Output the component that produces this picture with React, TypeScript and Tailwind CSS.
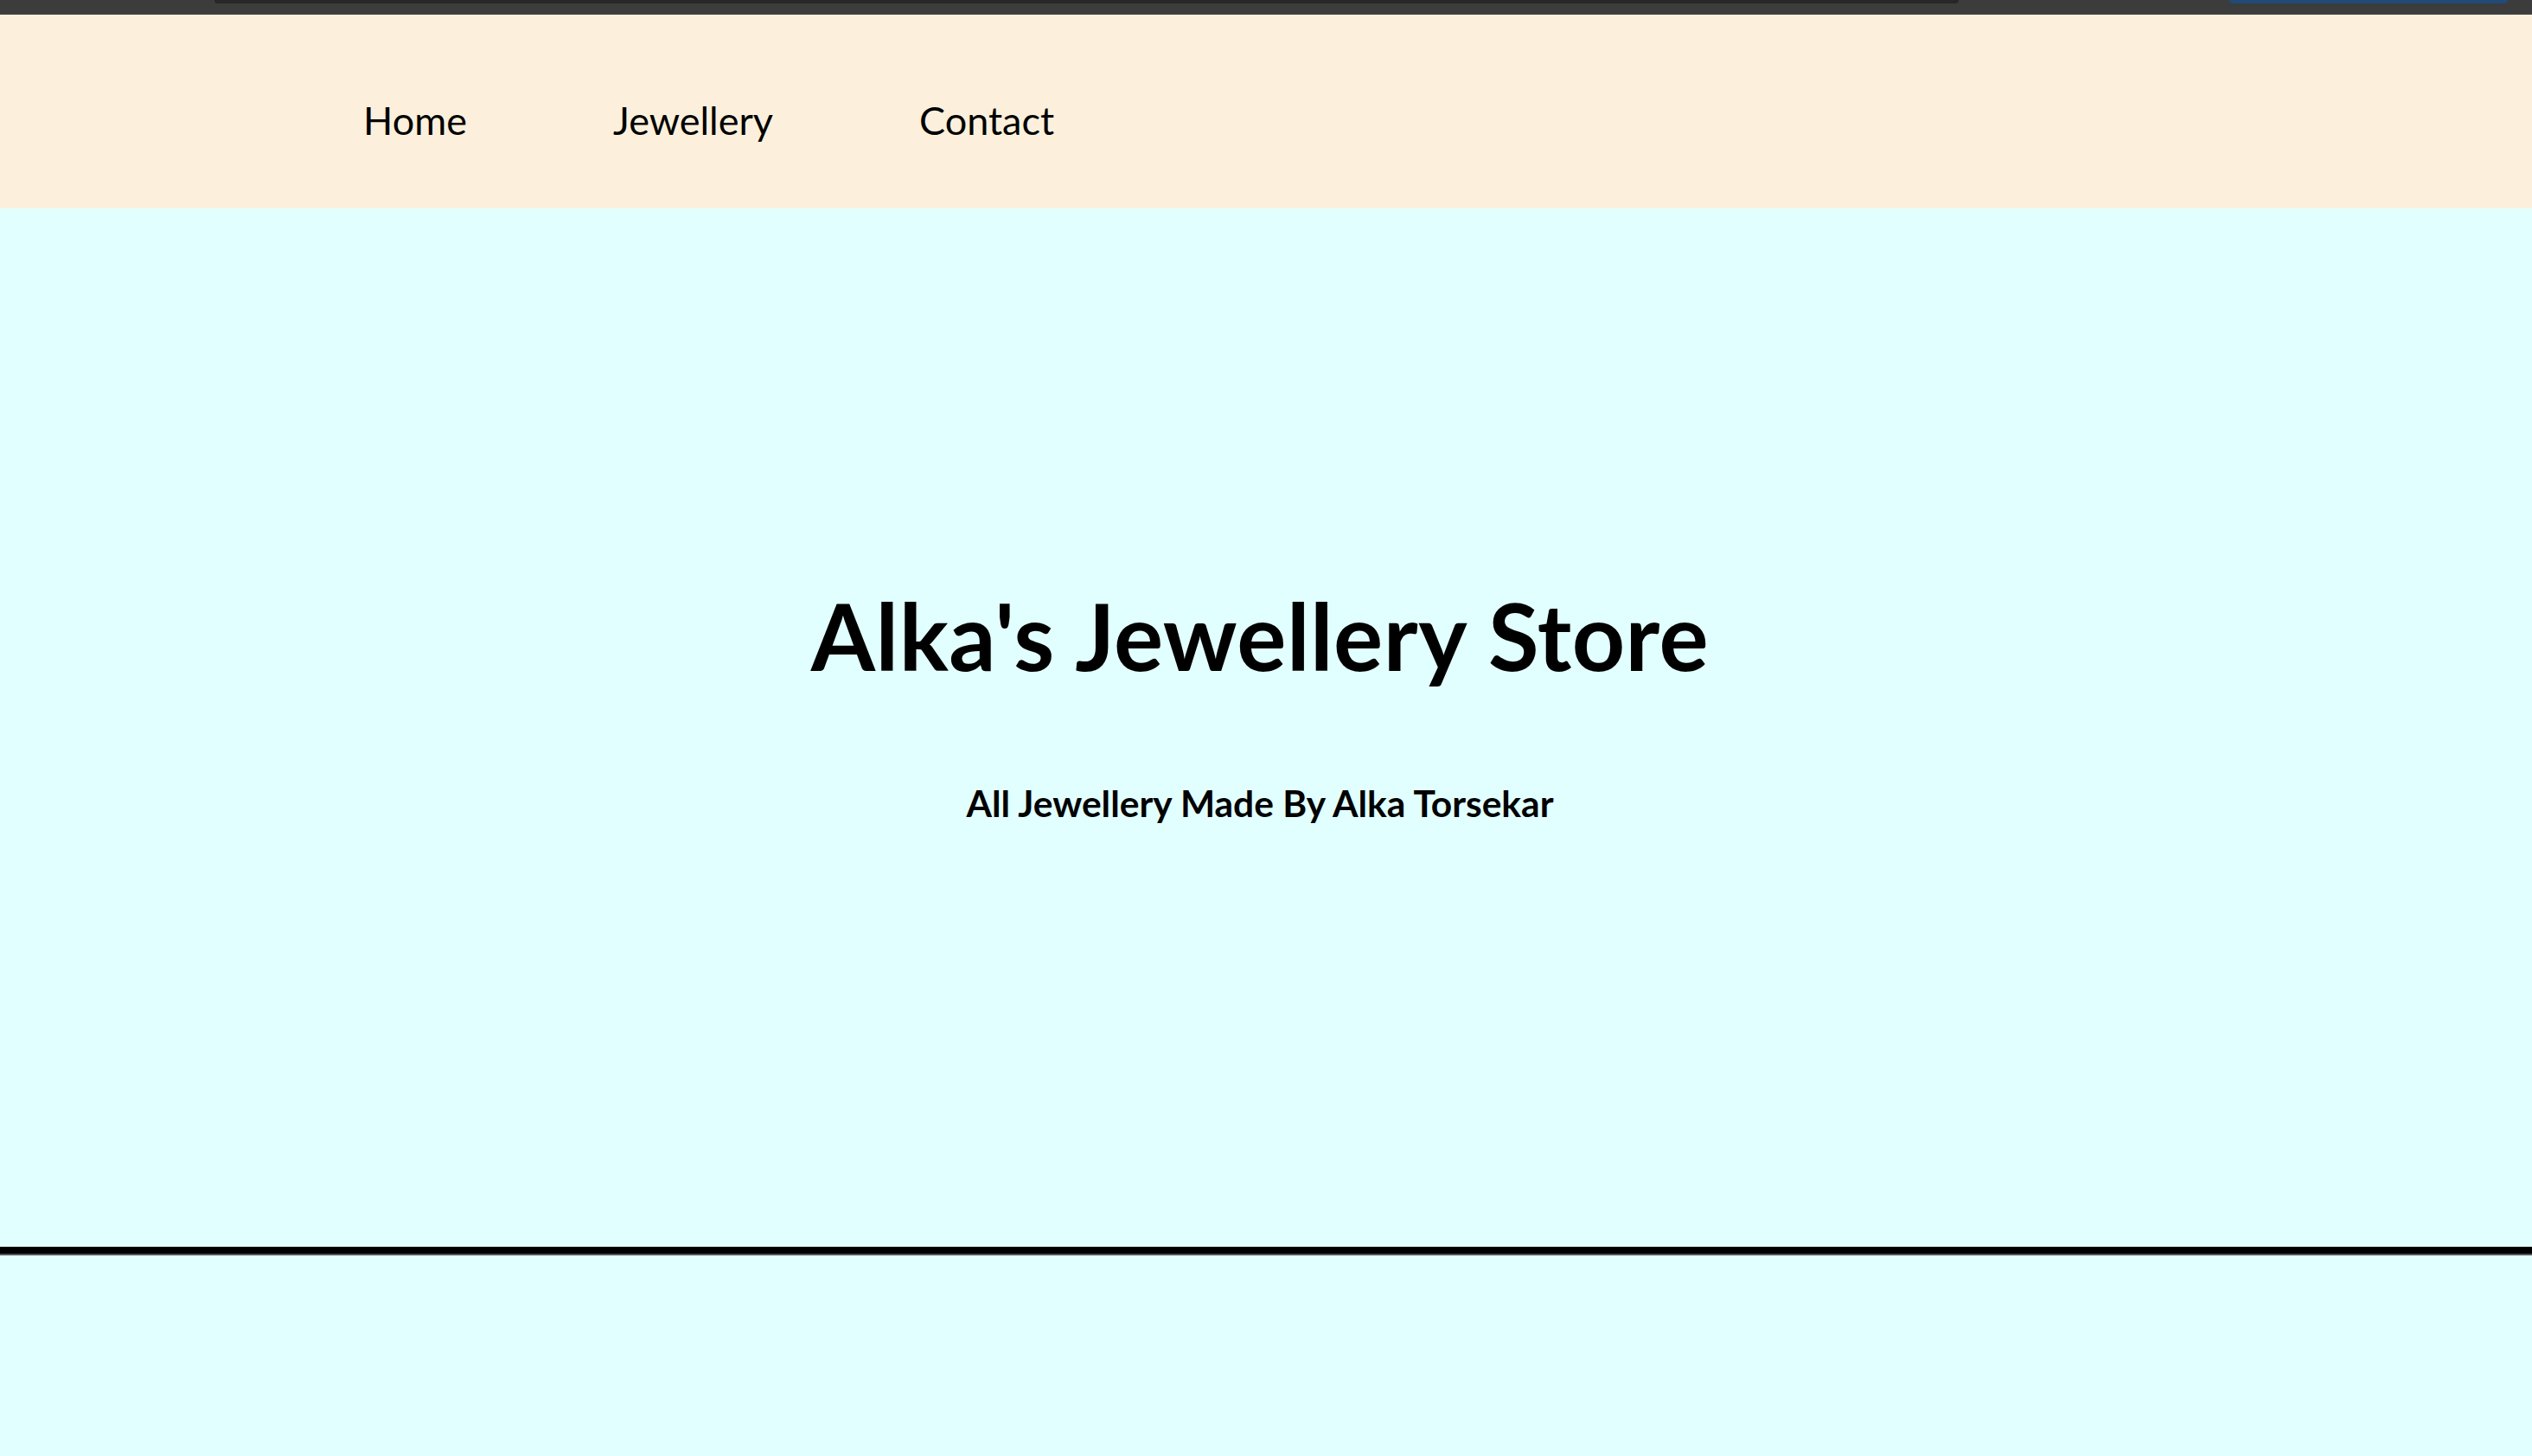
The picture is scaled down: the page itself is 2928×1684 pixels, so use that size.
const NAV_ITEMS = ["Home", "Jewellery", "Contact"];

function BrowserStrip() {
  // leftover browser chrome at the very top of the capture
  return (
    <div className="h-[17px] bg-[#3c3c3c] border-b border-[#4d4d4d] flex items-start">
      <div className="ml-[248px] w-[2017px] h-[4px] rounded-b-[8px] bg-[#272727]" />
      <div className="ml-[313px] w-[322px] h-[4px] rounded-b-[8px] bg-[#224a76]" />
    </div>
  );
}

function Header() {
  return (
    <header className="h-[224px] bg-[#fcf0dc] flex items-center pl-[420px] gap-[169px] pt-[20px]">
      {NAV_ITEMS.map((item) => (
        <a
          key={item}
          href="#"
          className="text-[45px] leading-none text-black font-normal"
        >
          {item}
        </a>
      ))}
    </header>
  );
}

function Hero() {
  return (
    <section className="h-[1201px] bg-[#e2ffff] flex flex-col items-center pt-[428px] pr-[14px]">
      <h1 className="text-[107px] leading-[132px] font-bold text-black tracking-[0.5px]">
        Alka's Jewellery Store
      </h1>
      <p className="mt-[100px] text-[42.5px] leading-[56px] font-bold text-black">
        All Jewellery Made By Alka Torsekar
      </p>
    </section>
  );
}

export default function App() {
  return (
    <div
      className="h-[1684px] flex flex-col bg-[#e2ffff] overflow-hidden"
      style={{ fontFamily: "Lato, 'Open Sans', sans-serif" }}
    >
      <BrowserStrip />
      <Header />
      <Hero />
      <div className="h-[8px] bg-black" />
      <div className="h-[2px] bg-[#555555]" />
      <div className="flex-1 bg-[#e2ffff]" />
    </div>
  );
}
